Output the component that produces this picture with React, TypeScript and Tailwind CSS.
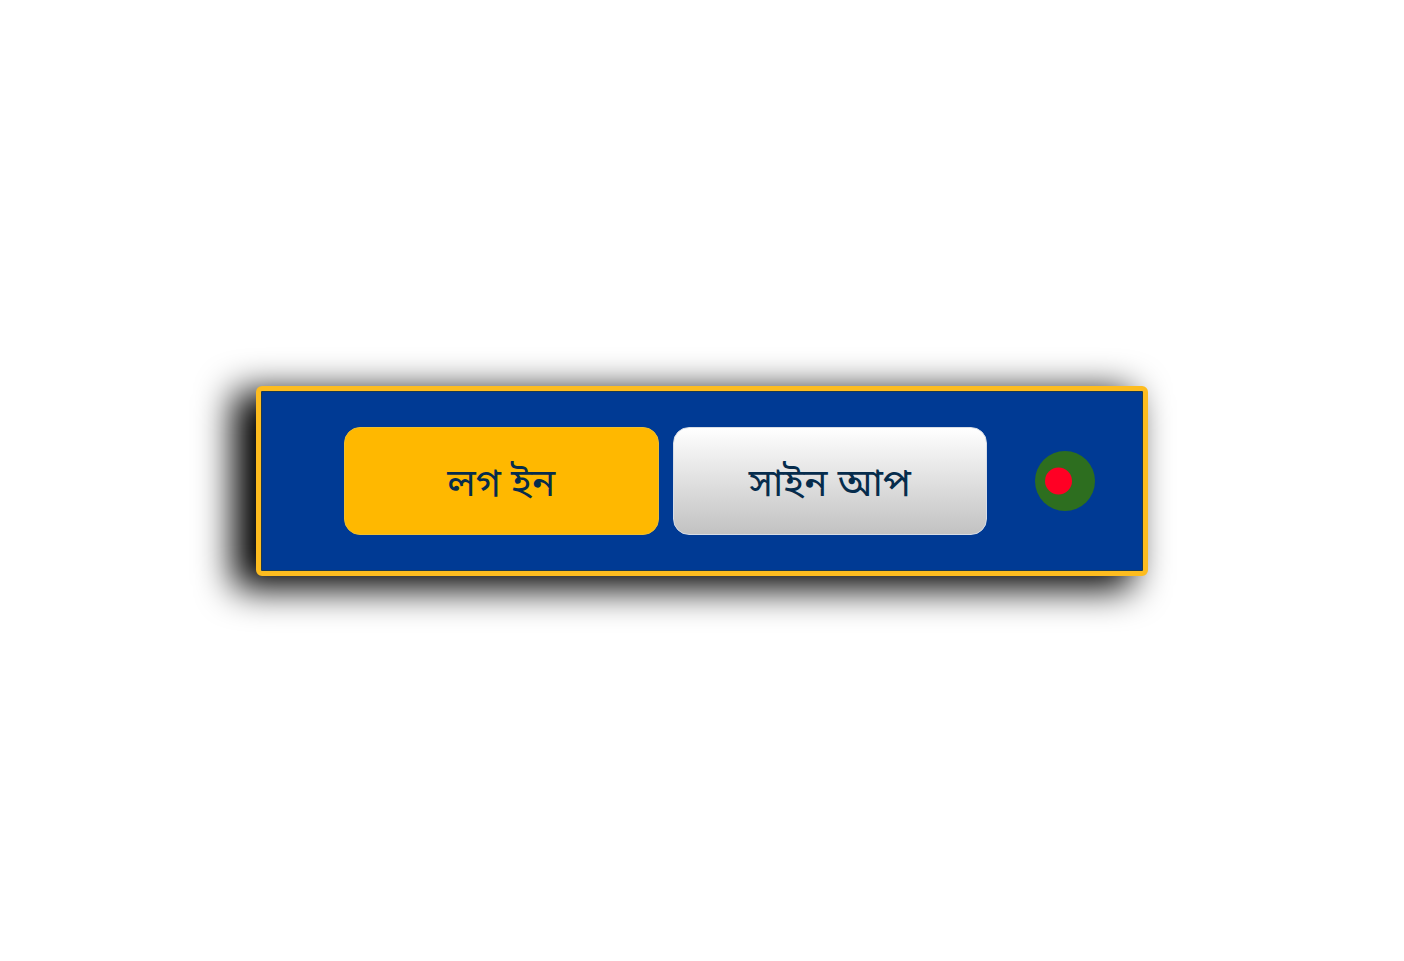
interface AuthBarProps {
  onLogin?: () => void;
  onSignup?: () => void;
}

const buttonBase =
  "h-[108px] flex-1 rounded-2xl border pt-3 text-[39px] text-[#062c4c] cursor-pointer font-['Noto_Sans_Bengali','Noto_Sans',sans-serif]";

function FlagIcon() {
  return (
    <svg viewBox="0 0 60 60" className="size-[60px]" aria-hidden="true">
      <circle cx="30" cy="30" r="30" fill="#2d6e1f" />
      <circle cx="23.5" cy="30" r="13.5" fill="#ff0024" />
    </svg>
  );
}

function AuthBar({ onLogin, onSignup }: AuthBarProps) {
  return (
    <nav className="flex w-full max-w-[892px] items-center rounded-md border-5 border-[#fdbc1f] bg-[#003a94] py-9 pr-12 pl-[83px] shadow-[-19px_9px_36px_4px_#000000,inset_0_0_0_1px_#1c3a50]">
      <div className="flex flex-1 gap-[14px]">
        <button
          type="button"
          onClick={onLogin}
          className={`${buttonBase} border-[#efbe2c] bg-[#ffb800]`}
        >
          লগ ইন
        </button>
        <button
          type="button"
          onClick={onSignup}
          className={`${buttonBase} border-[#d8dde6] bg-linear-to-b from-white to-[#c2c2c2]`}
        >
          সাইন আপ
        </button>
      </div>

      {/* Language */}
      <button type="button" aria-label="বাংলা" className="ml-12 cursor-pointer rounded-full">
        <FlagIcon />
      </button>
    </nav>
  );
}

export default function App() {
  return (
    <main lang="bn" className="flex min-h-screen items-center justify-center bg-white">
      <AuthBar />
    </main>
  );
}
